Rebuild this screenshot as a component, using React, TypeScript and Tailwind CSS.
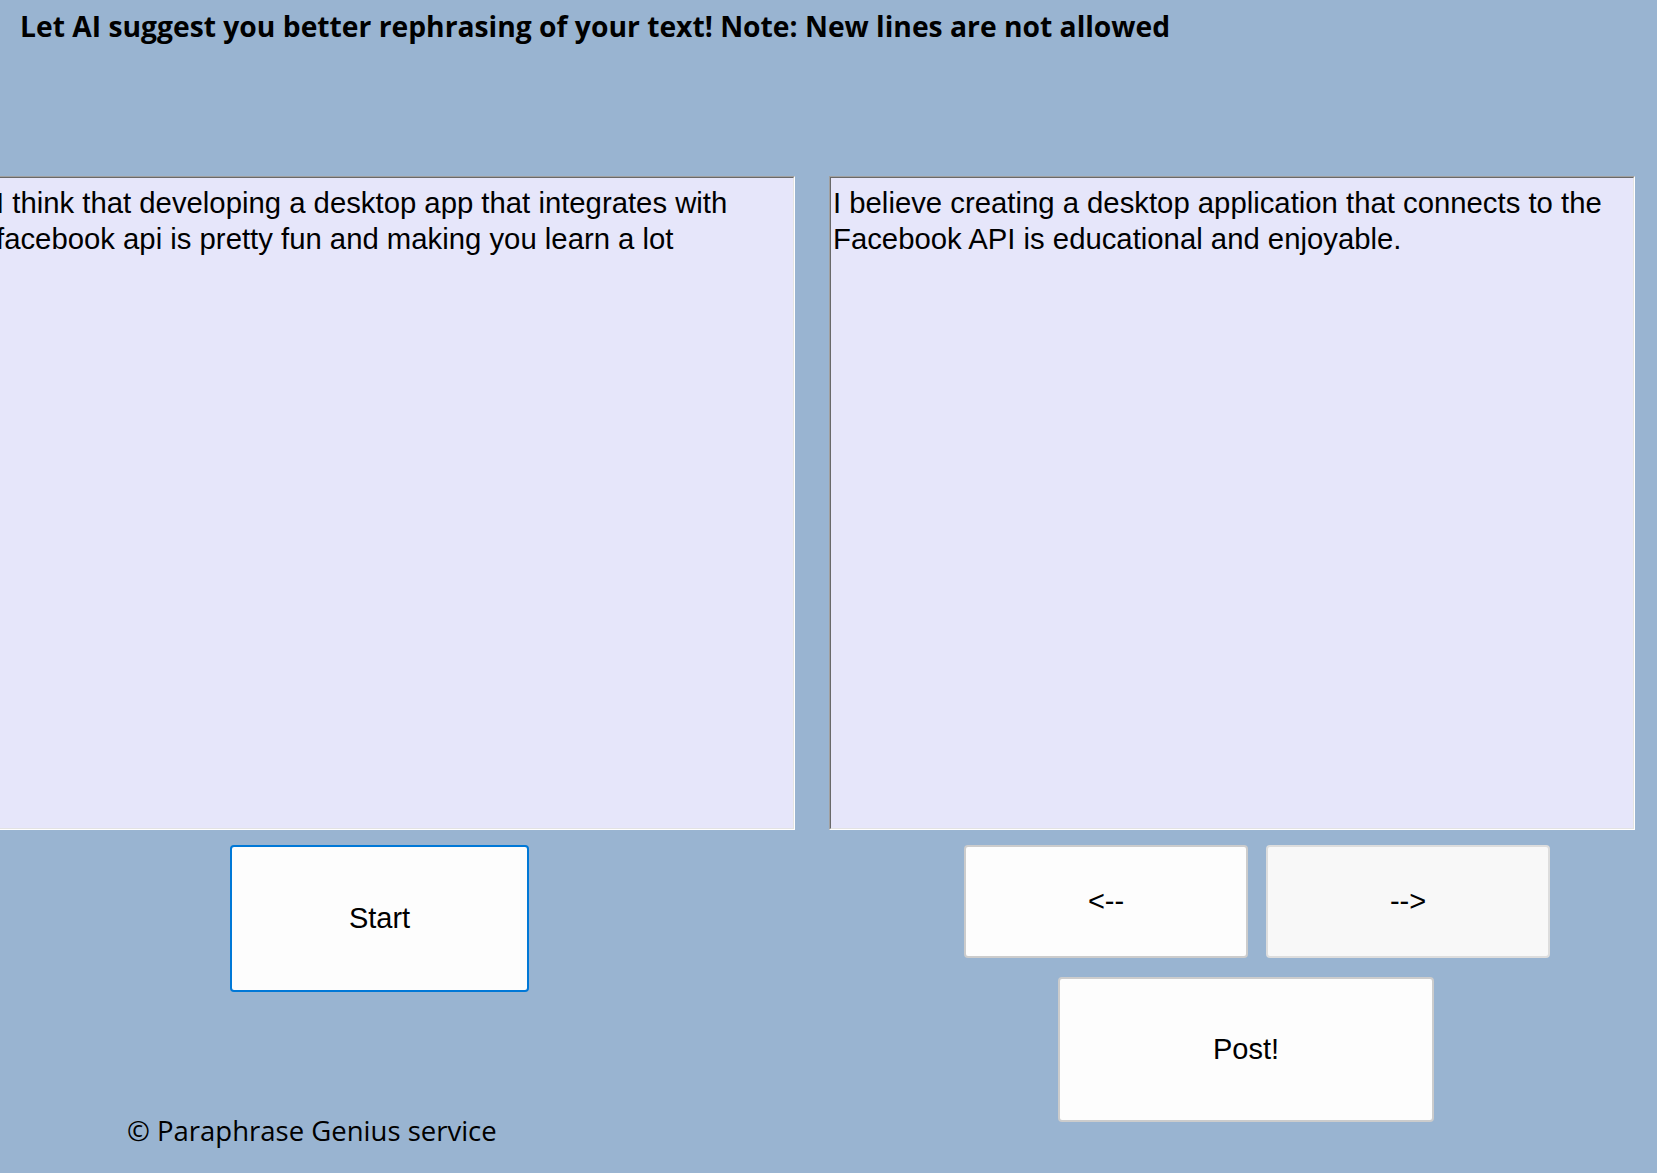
import React from 'react';

// Classic sunken text box (Fixed3D look)
const SunkenBox: React.FC<{ className?: string; children: React.ReactNode }> = ({ className = '', children }) => (
  <div className={`border border-t-[#a0a0a0] border-l-[#a0a0a0] border-b-white border-r-white ${className}`}>
    <div className="h-full border border-t-[#696969] border-l-[#696969] border-b-[#e3e3e3] border-r-[#e3e3e3] bg-[#e6e6fa] pl-[2px] pt-[7px] font-['Liberation_Sans',Arial,sans-serif] text-[29.3px] leading-[36px] text-black">
      {children}
    </div>
  </div>
);

const WinButton: React.FC<{ className?: string; focused?: boolean; children: React.ReactNode }> = ({
  className = '',
  focused = false,
  children
}) => (
  <button
    className={`flex items-center justify-center rounded-[4px] font-['Liberation_Sans',Arial,sans-serif] text-[29px] text-black ${
      focused ? 'border-2 border-[#0078d7] bg-[#fdfdfd]' : 'border-2 border-[#cccccc] bg-[#fdfdfd]'
    } ${className}`}
  >
    {children}
  </button>
);

export default function App() {
  return (
    <div className="w-[1657px] h-[1173px] overflow-hidden bg-[#99b4d1] flex flex-col">
      {/* Header note */}
      <div className="pl-[20px] pt-[7px] h-[176px] font-['Open_Sans',sans-serif] font-bold text-[28.25px] leading-[38px] text-black whitespace-nowrap">
        Let AI suggest you better rephrasing of your text! Note: New lines are not allowed
      </div>

      {/* Text boxes */}
      <div className="flex gap-[34px]">
        <SunkenBox className="ml-[-8px] w-[803px] h-[654px]">
          I think that developing a desktop app that integrates with
          <br />
          facebook api is pretty fun and making you learn a lot
        </SunkenBox>
        <SunkenBox className="w-[806px] h-[654px]">
          I believe creating a desktop application that connects to the
          <br />
          Facebook API is educational and enjoyable.
        </SunkenBox>
      </div>

      {/* Controls */}
      <div className="flex">
        <div className="w-[829px] flex flex-col">
          <WinButton focused className="ml-[230px] mt-[15px] w-[299px] h-[147px]">
            Start
          </WinButton>
          <div className="ml-[127px] mt-[120px] font-['Open_Sans',sans-serif] text-[27.5px] leading-[38px] text-black whitespace-nowrap">
            © Paraphrase Genius service
          </div>
        </div>
        <div className="flex flex-col">
          <div className="flex gap-[18px] ml-[135px] mt-[15px]">
            <WinButton className="w-[284px] h-[113px]">&lt;--</WinButton>
            <WinButton className="w-[284px] h-[113px] !bg-[#f8f8f8] !border-[#dddddd]">--&gt;</WinButton>
          </div>
          <WinButton className="ml-[229px] mt-[19px] w-[376px] h-[145px]">Post!</WinButton>
        </div>
      </div>
    </div>
  );
}
